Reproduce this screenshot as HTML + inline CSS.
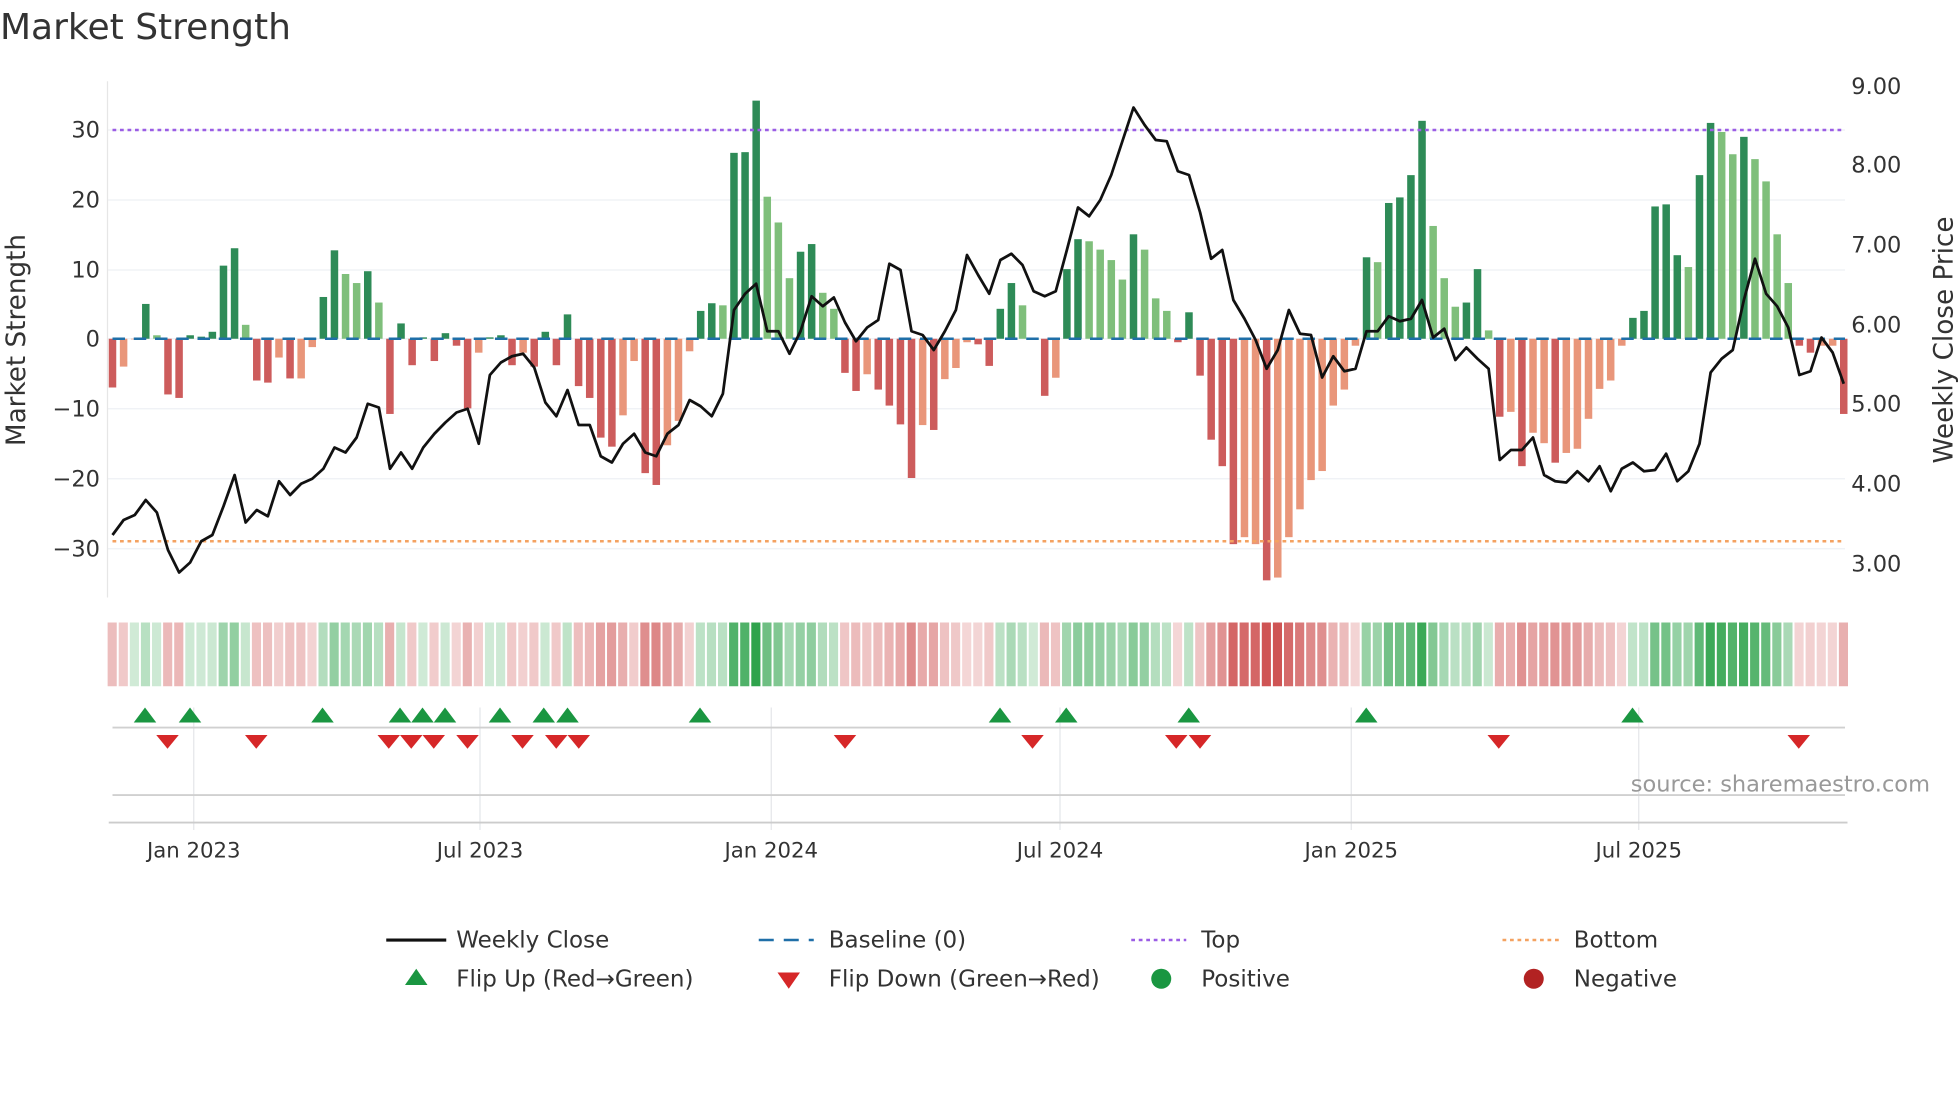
<!DOCTYPE html>
<html><head><meta charset="utf-8">
<style>
html,body{margin:0;padding:0;background:#fff;width:1960px;height:1102px;overflow:hidden}
svg{display:block}
text{font-family:"DejaVu Sans","Liberation Sans",sans-serif;fill:#333}
</style></head>
<body>
<svg id="s" width="1960" height="1102" viewBox="0 0 1568 881.6" xmlns="http://www.w3.org/2000/svg">
<text x="0" y="31" font-size="28.8" fill="#333">Market Strength</text>
<g id="grid"></g>
<line x1="86" y1="65" x2="86" y2="478" stroke="#e6e6e6" stroke-width="1"/>
<g font-size="18" text-anchor="end">
<text x="80" y="110">30</text><text x="80" y="166">20</text><text x="80" y="222">10</text><text x="80" y="277">0</text>
<text x="80" y="333">−10</text><text x="80" y="389">−20</text><text x="80" y="445">−30</text>
</g>
<g font-size="18" text-anchor="start">
<text x="1481" y="75">9.00</text><text x="1481" y="138">8.00</text><text x="1481" y="202">7.00</text><text x="1481" y="266">6.00</text>
<text x="1481" y="329">5.00</text><text x="1481" y="393">4.00</text><text x="1481" y="457">3.00</text>
</g>
<text font-size="21" transform="translate(20,272) rotate(-90)" text-anchor="middle">Market Strength</text>
<text font-size="21" transform="translate(1562,272) rotate(-90)" text-anchor="middle">Weekly Close Price</text>
<g id="bars"></g>
<line x1="90" y1="104" x2="1476" y2="104" stroke="#9b5de5" stroke-width="2" stroke-dasharray="3,3"/>
<line x1="90" y1="433" x2="1476" y2="433" stroke="#f4a261" stroke-width="2" stroke-dasharray="3,3"/>
<line x1="90" y1="271" x2="1476" y2="271" stroke="#1f6fa8" stroke-width="2" stroke-dasharray="10,7"/>
<polyline id="price" fill="none" stroke="#111" stroke-width="2.2" stroke-linejoin="round"/>
<g id="heat"></g>
<line x1="90" y1="582" x2="1476" y2="582" stroke="#d0d0d0" stroke-width="1.5"/>
<line x1="90" y1="636" x2="1476" y2="636" stroke="#d0d0d0" stroke-width="1.5"/>
<line x1="87" y1="658" x2="1478" y2="658" stroke="#ccc" stroke-width="1.5"/>
<g id="marks"></g>
<text x="1544" y="633" font-size="18" text-anchor="end" style="fill:#999">source: sharemaestro.com</text>
<g font-size="17" text-anchor="middle">
<text x="155" y="686">Jan 2023</text><text x="384" y="686">Jul 2023</text><text x="617" y="686">Jan 2024</text>
<text x="848" y="686">Jul 2024</text><text x="1081" y="686">Jan 2025</text><text x="1311" y="686">Jul 2025</text>
</g>
<g font-size="18.4">
<line x1="309" y1="752" x2="357" y2="752" stroke="#111" stroke-width="2.5"/>
<text x="365" y="758">Weekly Close</text>
<line x1="607" y1="752" x2="651" y2="752" stroke="#1f6fa8" stroke-width="2" stroke-dasharray="12,8"/>
<text x="663" y="758">Baseline (0)</text>
<line x1="905" y1="752" x2="949" y2="752" stroke="#9b5de5" stroke-width="2" stroke-dasharray="3,3"/>
<text x="961" y="758">Top</text>
<line x1="1202" y1="752" x2="1247" y2="752" stroke="#f4a261" stroke-width="2" stroke-dasharray="3,3"/>
<text x="1259" y="758">Bottom</text>
<polygon points="324,788 333,775 342,788" fill="#1a9641"/>
<text x="365" y="789">Flip Up (Red→Green)</text>
<polygon points="622,778 640,778 631,791" fill="#d62728"/>
<text x="663" y="789">Flip Down (Green→Red)</text>
<circle cx="929" cy="783" r="8" fill="#1a9641"/>
<text x="961" y="789">Positive</text>
<circle cx="1227" cy="783" r="8" fill="#b22222"/>
<text x="1259" y="789">Negative</text>
</g>
</svg>
<script>
var NS="http://www.w3.org/2000/svg";
function el(t,a,p){var e=document.createElementNS(NS,t);for(var k in a)e.setAttribute(k,a[k]);document.getElementById(p).appendChild(e);return e;}
[104,160,216,271,327,383,439].forEach(function(y){el("line",{x1:86,y1:y,x2:1476,y2:y,stroke:"#eef0f4","stroke-width":1},"grid");});
[155,384,617,848,1081,1311].forEach(function(x){el("line",{x1:x,y1:566,x2:x,y2:664,stroke:"#e4e6ea","stroke-width":1},"grid");});
var B="-7r -4o 0o 5d .5l -8r -8.5r .5d .3d 1d 10.5d 13d 2l -6r -6.3r -2.7o -5.7r -5.7o -1.2o 6d 12.7d 9.3l 8l 9.7d 5.2l -10.8r 2.2d -3.8r .2d -3.2r .8d -1r -10r -2o .2d .5d -3.8r -2o -4r 1d -3.8r 3.5d -6.8r -8.5r -14.2r -15.5r -11o -3.2o -19.3r -21r -15.3o -11.8o -1.8o 4d 5.1d 4.8l 26.7d 26.8d 34.2d 20.4l 16.7l 8.7l 12.5d 13.6d 6.6l 4.3l -4.9r -7.5r -5.1o -7.3r -9.6r -12.3r -20r -12.4o -13.1r -5.8o -4.2o -.5o -.8r -3.9r 4.3d 8d 4.8l 0o -8.2r -5.6o 10d 14.3d 14l 12.8l 11.3l 8.5l 15d 12.8l 5.8l 4l -.5r 3.8d -5.3r -14.5r -18.3r -29.5r -28.5o -29.5o -34.7r -34.3o -28.5o -24.5o -20.3o -19o -9.6o -7.3o -1o 11.7d 11l 19.5d 20.3d 23.5d 31.3d 16.2l 8.7l 4.6l 5.2d 10d 1.2l -11.2r -10.5o -18.3r -13.5o -15o -17.8r -16.4o -15.8o -11.5o -7.2o -6o -1o 3d 4d 19d 19.3d 12d 10.3l 23.5d 31d 29.7l 26.5l 29d 25.8l 22.6l 15l 8l -1r -2r -1o -1o -10.8r".split(" ");
var col={d:"#2e8b57",l:"#7fbf7b",r:"#cd5c5c",o:"#e9967a"};
var n=B.length, x0=90, dx=(1475-90)/(n-1);
B.forEach(function(s,i){
 var v=parseFloat(s), t=s.slice(-1), x=x0+i*dx, y0=271, h=v*5.57;
 el("rect",{x:x-3,y:h>0?y0-h:y0,width:6,height:Math.max(Math.abs(h),0.5),fill:col[t]},"bars");
 var a=Math.min(0.22+Math.abs(v)/34*0.75,0.97);
 var c=v>=0?"rgba(40,160,70,"+a+")":"rgba(200,60,60,"+a*0.9+")";
 el("rect",{x:x-3.9,y:498,width:7.3,height:51,fill:c},"heat");
});
var P=[428,416,412,400,410,440,458,450,433,428,405,380,418,408,413,385,396,387,383,375,358,362,350,323,326,375,362,375,358,347,338,330,327,355,300,290,285,283,294,322,333,312,340,340,365,370,355,347,362,365,347,340,320,325,333,315,248,235,227,265,265,283,265,237,245,238,258,273,262,256,211,216,265,268,280,265,248,204,220,235,208,203,212,233,237,233,200,166,173,160,140,113,86,100,112,113,137,140,170,207,200,240,255,272,295,280,248,267,268,302,285,297,295,265,265,253,257,255,240,270,263,288,278,287,295,368,360,360,350,380,385,386,377,385,373,393,375,370,377,376,363,385,377,355,298,287,280,240,207,235,245,262,300,297,270,282,307];
var pdx=(1475-90)/(P.length-1);
document.getElementById("price").setAttribute("points",P.map(function(y,i){return (90+i*pdx).toFixed(1)+","+y;}).join(" "));
[116,152,258,320,338,356,400,435,454,560,800,853,951,1093,1306].forEach(function(x){el("polygon",{points:(x-9)+",578 "+x+",566 "+(x+9)+",578",fill:"#1a9641"},"marks");});
[134,205,311,329,347,374,418,445,463,676,826,941,960,1199,1439].forEach(function(x){el("polygon",{points:(x-9)+",588 "+(x+9)+",588 "+x+",599",fill:"#d62728"},"marks");});
</script>
</body></html>
